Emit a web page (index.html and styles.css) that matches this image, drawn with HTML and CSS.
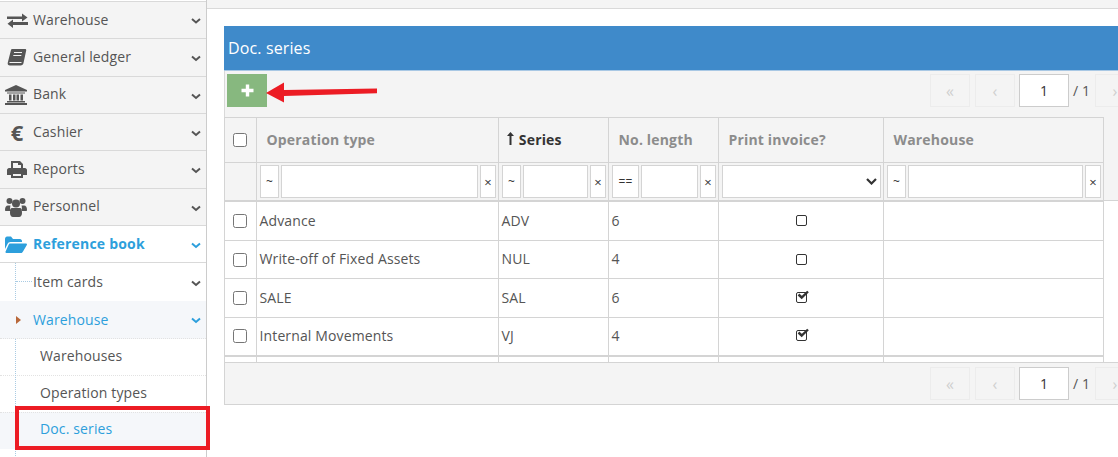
FILE: index.html
```html
<!DOCTYPE html>
<html lang="en">
<head>
<meta charset="utf-8">
<title>Doc. series</title>
<link rel="stylesheet" href="styles.css">
</head>
<body>
<div class="app">
  <aside class="sidebar">
    <ul class="menu">
      <li class="item"><span class="ico"><svg width="21" height="15" viewBox="0 0 21 15"><path d="M0 3.500h15V0.500l5.500 4-5.500 4V6H0zM21 9H6V6.500L0.500 10.800 6 15v-3h15z" fill="#555"/></svg></span><span class="label">Warehouse</span><svg class="chev" width="10" height="7" viewBox="0 0 10 7"><path d="M1 1l4 3.500 4-3.500" fill="none" stroke="#555" stroke-width="2"/></svg></li>
      <li class="item"><span class="ico"><svg width="20" height="18" viewBox="0 0 20 18"><path d="M5 1h13c1 0 1.400.7 1.200 1.500L16.500 15c-.3 1.500-1.200 2.500-3 2.500H3c-1.800 0-2.700-1.300-2.200-3L4 2c.2-.6.500-1 1-1z" fill="#555"/><path d="M7 4.500h8M6.300 7.500h8M2.500 14.500h12" stroke="#f4f4f4" stroke-width="1.200" fill="none"/></svg></span><span class="label">General ledger</span><svg class="chev" width="10" height="7" viewBox="0 0 10 7"><path d="M1 1.500l4 3.500 4-3.500" fill="none" stroke="#555" stroke-width="2"/></svg></li>
      <li class="item"><span class="ico ico-left"><svg width="22" height="20" viewBox="0 0 22 20"><path d="M11 0l11 5v1.500H0V5zM2 7.500h18v1H2zM4 9.500h2.500v6H4zM8 9.500h2.500v6H8zM11.500 9.500H14v6h-2.500zM15.500 9.500H18v6h-2.500zM2 16h18v1.500H2zM0 18h22v2H0z" fill="#555"/></svg></span><span class="label">Bank</span><svg class="chev" width="10" height="7" viewBox="0 0 10 7"><path d="M1 1.500l4 3.500 4-3.500" fill="none" stroke="#555" stroke-width="2"/></svg></li>
      <li class="item"><span class="ico ico-euro">€</span><span class="label">Cashier</span><svg class="chev" width="10" height="7" viewBox="0 0 10 7"><path d="M1 1.500l4 3.500 4-3.500" fill="none" stroke="#555" stroke-width="2"/></svg></li>
      <li class="item"><span class="ico"><svg width="20" height="18" viewBox="0 0 20 18"><path d="M4 1h9l3 3v4h-2V5h-3V3H6v5H4zM2 8h16c1 0 2 1 2 2v5h-4v3H4v-3H0v-5c0-1 1-2 2-2zm4 6v2h8v-2z" fill="#555"/></svg></span><span class="label">Reports</span><svg class="chev" width="10" height="7" viewBox="0 0 10 7"><path d="M1 1.500l4 3.500 4-3.500" fill="none" stroke="#555" stroke-width="2"/></svg></li>
      <li class="item"><span class="ico ico-left"><svg width="22" height="20" viewBox="0 0 22 20"><circle cx="4.500" cy="4" r="3" fill="#555"/><circle cx="17.500" cy="4" r="3" fill="#555"/><circle cx="11" cy="6.500" r="4" fill="#555"/><path d="M0 13c0-3 1-4.500 3-4.500h2.500C5 10 5 12 5.500 14H1c-.6 0-1-.4-1-1zM22 13c0-3-1-4.500-3-4.500h-2.500c.5 1.500.5 3.500 0 5.500H21c.6 0 1-.4 1-1zM7 11h8c1.500 0 2 2 2 5 0 2-1 4-3 4H8c-2 0-3-2-3-4 0-3 .5-5 2-5z" fill="#555"/></svg></span><span class="label">Personnel</span><svg class="chev" width="10" height="7" viewBox="0 0 10 7"><path d="M1 1.500l4 3.500 4-3.500" fill="none" stroke="#555" stroke-width="2"/></svg></li>
      <li class="item item-open"><span class="ico ico-left"><svg width="22" height="17" viewBox="0 0 22 17"><path d="M0 3c0-1.500 1-2.500 2-2.500h4L8 3h7c1 0 2 1 2 2v1H5.500C4 6 3 6.700 2.500 8L0 13z" fill="#2d9fdc"/><path d="M5 7.500h16c1 0 1.200.8.800 1.500L18 15.500c-.4.800-1 1.500-2 1.500H1.500c-1 0-1.300-.8-.9-1.500L3.500 9c.4-.9.800-1.500 1.500-1.500z" fill="#2d9fdc"/></svg></span><span class="label">Reference book</span><svg class="chev" width="10" height="7" viewBox="0 0 10 7"><path d="M1 1.500l4 3.500 4-3.500" fill="none" stroke="#2d9fdc" stroke-width="2"/></svg></li>
    </ul>
    <ul class="submenu">
      <li class="sub sub-first"><span class="tick"></span><span class="label">Item cards</span><svg class="chev" width="10" height="7" viewBox="0 0 10 7"><path d="M1 1.500l4 3.500 4-3.500" fill="none" stroke="#555" stroke-width="2"/></svg></li>
      <li class="sub sub-active"><span class="marker"></span><span class="label">Warehouse</span><svg class="chev" width="10" height="7" viewBox="0 0 10 7"><path d="M1 1.500l4 3.500 4-3.500" fill="none" stroke="#2d9fdc" stroke-width="2"/></svg></li>
      <li class="leaf">Warehouses</li>
      <li class="leaf">Operation types</li>
      <li class="leaf leaf-current">Doc. series</li>
    </ul>
  </aside>

  <main class="main">
    <div class="topbar"></div>
    <section class="panel">
      <h1 class="panel-title">Doc. series</h1>
      <div class="toolbar">
        <button class="add" type="button">
          <svg width="13" height="13" viewBox="0 0 13 13"><path d="M4.800 0.500h3.400v4.300h4.300v3.400H8.200v4.300H4.800V8.200H0.500V4.800h4.300z" fill="#fff"/></svg>
        </button>
        <div class="pager">
          <span class="pg">«</span><span class="pg">‹</span><span class="pg-input">1</span><span class="pg-total">/ 1</span><span class="pg">›</span>
        </div>
      </div>

      <div class="grid-head">
        <table class="grid">
          <colgroup><col class="c0"><col class="c1"><col class="c2"><col class="c3"><col class="c4"><col class="c5"></colgroup>
          <tr class="head-row">
            <th class="cell-check"><span class="cb"></span></th>
            <th>Operation type</th>
            <th class="sorted">
              <svg width="7" height="13" viewBox="0 0 7 13"><path d="M3.500 0L7 4H4.500v9h-2V4H0z" fill="#333"/></svg> Series</th>
            <th>No. length</th>
            <th>Print invoice?</th>
            <th>Warehouse</th>
          </tr>
          <tr class="filter-row">
            <td></td>
            <td><div class="filter"><span class="f-op">~</span><span class="f-in"></span><span class="f-x">×</span></div></td>
            <td><div class="filter"><span class="f-op">~</span><span class="f-in"></span><span class="f-x">×</span></div></td>
            <td><div class="filter"><span class="f-op f-op-wide">==</span><span class="f-in"></span><span class="f-x">×</span></div></td>
            <td><div class="filter"><span class="f-select"><svg width="11" height="7" viewBox="0 0 11 7"><path d="M1 1l4.500 4.500L10 1" fill="none" stroke="#333" stroke-width="2.200"/></svg></span></div></td>
            <td><div class="filter"><span class="f-op">~</span><span class="f-in"></span><span class="f-x">×</span></div></td>
          </tr>
        </table>
      </div>

      <div class="grid-body">
        <table class="grid">
          <colgroup><col class="c0"><col class="c1"><col class="c2"><col class="c3"><col class="c4"><col class="c5"></colgroup>
          <tr class="row r-a">
            <td class="cell-check"><span class="cb"></span></td><td>Advance</td><td>ADV</td><td>6</td>
            <td class="cell-flag"><span class="flag"></span></td><td></td>
          </tr>
          <tr class="row r-b">
            <td class="cell-check"><span class="cb"></span></td><td>Write-off of Fixed Assets</td><td>NUL</td><td>4</td>
            <td class="cell-flag"><span class="flag"></span></td><td></td>
          </tr>
          <tr class="row r-a">
            <td class="cell-check"><span class="cb"></span></td><td>SALE</td><td>SAL</td><td>6</td>
            <td class="cell-flag"><span class="flag"><svg class="tickmark" width="12" height="10" viewBox="0 0 12 10"><path d="M1.500 4.500L4.700 7.500 11 1.500" fill="none" stroke="#333" stroke-width="2.400"/></svg></span></td><td></td>
          </tr>
          <tr class="row r-b">
            <td class="cell-check"><span class="cb"></span></td><td>Internal Movements</td><td>VJ</td><td>4</td>
            <td class="cell-flag"><span class="flag"><svg class="tickmark" width="12" height="10" viewBox="0 0 12 10"><path d="M1.500 4.500L4.700 7.500 11 1.500" fill="none" stroke="#333" stroke-width="2.400"/></svg></span></td><td></td>
          </tr>
          <tr class="row-end"><td></td><td></td><td></td><td></td><td></td><td></td></tr>
        </table>
      </div>

      <div class="footer">
        <div class="pager">
          <span class="pg">«</span><span class="pg">‹</span><span class="pg-input">1</span><span class="pg-total">/ 1</span><span class="pg">›</span>
        </div>
      </div>
    </section>
  </main>

  <svg class="callout-arrow" width="112" height="24" viewBox="0 0 112 24"><path d="M0 12L18 1.500V9L111 7.500V12.300L18 15V21.500z" fill="#ec1c24"/></svg>
  <div class="callout-box"></div>
</div>
</body>
</html>
```

FILE: styles.css
```css
* { box-sizing: border-box; }
html, body { margin: 0; padding: 0; height: 100%; }
body { background: #fff; overflow: hidden; font-family: "Open Sans", sans-serif; font-size: 14px; letter-spacing: 0.13px; color: #555; }
ul { list-style: none; margin: 0; padding: 0; }

.app { position: relative; display: flex; width: 1118px; height: 457px; overflow: hidden; }

/* sidebar */
.sidebar { position: relative; flex: none; width: 207px; border-right: 1px solid #ccc; background: #fff; }
.menu { margin-top: 1px; border-top: 1px solid #d9d9d9; background: #f4f4f4; }
.item { display: flex; align-items: center; height: 37.33px; border-bottom: 1px solid #d9d9d9; padding-right: 5px; }
.ico { display: flex; justify-content: center; align-items: center; flex: none; width: 33px; padding-left: 5px; padding-right: 4px; }
.ico-left { padding-left: 4px; padding-right: 5px; }
.ico-euro { font-size: 22px; font-weight: 700; line-height: 20px; color: #555; padding-right: 5px; padding-left: 6px; }
.label { flex: 1; padding-bottom: 2px; white-space: nowrap; }
.chev { flex: none; margin-top: 3px; }
.item-open { background: #fff; }
.item-open .label { color: #2d9fdc; font-weight: 700; letter-spacing: 0.2px; }

.submenu { position: relative; }
.submenu::before { content: ""; position: absolute; left: 15px; top: 0; height: 195px; border-left: 1px dotted #a9cbe3; }
.sub { position: relative; display: flex; align-items: center; height: 37.7px; padding-left: 33px; padding-right: 5px; }
.sub-active { background: #f5f7fa; border-bottom: 1px dotted #e2e2e2; padding-top: 2px; }
.sub-active .label { color: #2d9fdc; }
.sub-active .chev { margin-top: 1px; }
.tick { position: absolute; left: 16px; top: 18px; width: 16px; border-top: 1px dotted #a9cbe3; }
.marker { position: absolute; left: 16px; top: 15px; border-left: 5px solid #b9683a; border-top: 4px solid transparent; border-bottom: 4px solid transparent; }
.leaf { display: flex; align-items: center; height: 36.7px; padding-left: 40px; padding-bottom: 4px; }
.leaf + .leaf { border-top: 1px dotted #e2e2e2; }
.leaf-current { color: #2d9fdc; background: #f5f7fa; }

/* main */
.main { flex: 1; min-width: 0; overflow: hidden; }
.topbar { height: 9px; background: #f4f4f4; border-bottom: 1px solid #d9d9d9; }
.panel { width: 919px; margin: 17px 0 0 17px; }
.panel-title { margin: 0; height: 45px; padding: 10px 0 0 4px; background: #3f8aca; color: #fff; font-size: 16px; font-weight: 400; line-height: 24px; border-bottom: 1px solid #a9c8e4; }

.toolbar { display: flex; justify-content: space-between; height: 46px; padding: 3px 3px 0 2px; background: #f4f4f4; border-left: 1px solid #d9d9d9; }
.add { display: flex; align-items: center; justify-content: center; width: 40px; height: 33px; padding: 0; border: 0; background: #87b87f; }
.pager { display: flex; align-items: center; height: 33px; }
.pg { display: flex; align-items: center; justify-content: center; width: 40px; height: 33px; margin-right: 5px; border: 1px solid #ececec; color: #cfcfcf; font-size: 16px; }
.pg-input { display: flex; align-items: center; justify-content: center; width: 50px; height: 33px; margin-left: -1px; background: #fff; border: 1px solid #ccc; color: #333; font-size: 14px; }
.pg-total { width: 26px; padding-left: 4px; color: #555; font-size: 14px; margin-right: 0; }

.grid { width: 879px; table-layout: fixed; border-collapse: collapse; }
.c0 { width: 32px; }
.c1 { width: 242px; }
.c2 { width: 110px; }
.c3 { width: 110px; }
.c4 { width: 165px; }
.c5 { width: 220px; }
.grid th, .grid td { padding: 0; border: 1px solid #d4d4d4; text-align: left; overflow: hidden; }

.grid-head { background: #f4f4f4; height: 83px; }
.head-row { height: 45px; }
.head-row th { padding-left: 9.500px; padding-bottom: 1px; color: #8c8c8c; font-weight: 700; font-size: 14px; letter-spacing: 0.17px; }
.head-row th.cell-check { padding: 0; }
.head-row th.sorted { padding-left: 8px; color: #333; }
.sorted svg { margin-right: 1px; }
.filter-row { height: 38px; }
.filter-row td { padding: 2px 2px 2px 3px; }
.filter { display: flex; gap: 2px; height: 33px; }
.f-op, .f-in, .f-x, .f-select { display: flex; align-items: center; background: #fff; border: 1px solid #d4d4d4; color: #333; }
.f-op { flex: none; width: 19px; justify-content: center; font-size: 12px; }
.f-op-wide { width: 27px; }
.f-in { flex: 1; }
.f-x { flex: none; width: 16px; justify-content: center; font-size: 13px; }
.f-select { flex: 1; justify-content: flex-end; padding-right: 3px; }

.grid-body { background: #fff; height: 162px; border-top: 1px solid #d4d4d4; }
.row td { padding-left: 2.500px; padding-bottom: 2px; color: #555; }
.r-a { height: 39px; }
.r-b { height: 38px; }
.row .cell-check, .row .cell-flag { padding: 0; }
.row-end { height: 7px; }
.row-end td { border-top: 2px solid #d4d4d4; border-bottom: 0; }

.cb { display: block; width: 14px; height: 14px; margin-left: 8px; background: #fff; border: 1px solid #767676; border-radius: 2.500px; }
.flag { position: relative; display: block; width: 11px; height: 11px; margin: 0 auto 1px; border: 1.500px solid #333; border-radius: 2px; }
.tickmark { position: absolute; left: 0; top: -3px; }

.footer { display: flex; justify-content: flex-end; height: 43px; padding: 4px 3px 0 0; background: #f4f4f4; border: 1px solid #d4d4d4; border-right: 0; }

/* annotations lying over the page */
.callout-arrow { position: absolute; left: 266px; top: 81px; }
.callout-box { position: absolute; left: 15px; top: 406px; width: 195px; height: 44px; border: 4px solid #ec1c24; }
```
